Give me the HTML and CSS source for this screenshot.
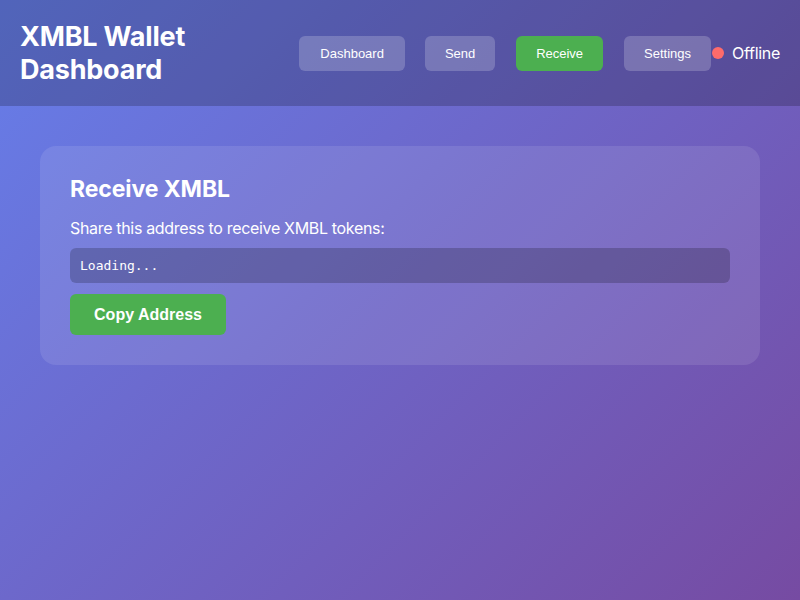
FILE: index.html
```html
<!DOCTYPE html>
<html lang="en">
<head>
<meta charset="utf-8">
<title>XMBL Wallet Dashboard</title>
<link rel="stylesheet" href="styles.css">
</head>
<body>
<header class="header">
  <h1 class="title">XMBL Wallet<br>Dashboard</h1>
  <nav class="nav">
    <button class="nav-btn nav-dashboard">Dashboard</button>
    <button class="nav-btn nav-send">Send</button>
    <button class="nav-btn nav-receive active">Receive</button>
    <button class="nav-btn nav-settings">Settings</button>
  </nav>
  <div class="status"><span class="dot"></span><span class="status-text">Offline</span></div>
</header>
<main class="main">
  <section class="card">
    <h2 class="card-title">Receive XMBL</h2>
    <p class="card-text">Share this address to receive XMBL tokens:</p>
    <div class="address">Loading...</div>
    <button class="copy-btn">Copy Address</button>
  </section>
</main>
</body>
</html>
```
FILE: styles.css
```css
* { box-sizing: border-box; }
html, body { height: 100%; }
body {
  margin: 0;
  font-family: Inter, "Noto Sans", sans-serif;
  color: #fff;
  background: linear-gradient(135deg, #667eea 0%, #764ba2 100%);
  min-height: 600px;
}
.header {
  display: flex;
  align-items: center;
  padding: 20px;
  background: rgba(0, 0, 0, 0.2);
  height: 106px;
}
.title {
  margin: 0;
  font-size: 27px;
  line-height: 33px;
  font-weight: 700;
  letter-spacing: -0.2px;
  flex: 1;
}
.nav {
  display: flex;
  gap: 21px;
}
.nav-btn {
  font-family: "Liberation Sans", Arial, sans-serif;
  font-size: 13px;
  color: #fff;
  background: rgba(255, 255, 255, 0.2);
  border: none;
  border-radius: 6px;
  height: 35px;
  padding: 0;
}
.nav-dashboard { width: 106px; margin-right: -1px; }
.nav-send { width: 70px; }
.nav-receive { width: 87px; }
.nav-settings { width: 87px; }
.nav-btn.active { background: #4caf50; }
.status {
  display: flex;
  align-items: center;
  gap: 8px;
  margin-left: 1px;
  font-size: 16px;
  letter-spacing: -0.3px;
}
.dot {
  width: 12px;
  height: 12px;
  border-radius: 50%;
  background: #ff6b6b;
}
.main {
  padding: 40px;
}
.card {
  background: rgba(255, 255, 255, 0.1);
  border-radius: 16px;
  padding: 30px;
}
.card-title {
  margin: 0 0 15px;
  font-size: 23px;
  line-height: 27px;
  font-weight: 700;
  letter-spacing: -0.1px;
}
.card-text {
  margin: 0 0 10px;
  font-size: 16px;
  line-height: 20px;
  letter-spacing: -0.33px;
}
.address {
  background: rgba(0, 0, 0, 0.2);
  border-radius: 6px;
  height: 35px;
  padding: 0 10px;
  display: flex;
  align-items: center;
  font-family: "DejaVu Sans Mono", monospace;
  font-size: 13px;
  margin-bottom: 11px;
}
.copy-btn {
  font-family: "Liberation Sans", Arial, sans-serif;
  font-size: 16px;
  font-weight: 700;
  color: #fff;
  background: #4caf50;
  border: none;
  border-radius: 6px;
  height: 41px;
  padding: 0;
  width: 156px;
}
```
